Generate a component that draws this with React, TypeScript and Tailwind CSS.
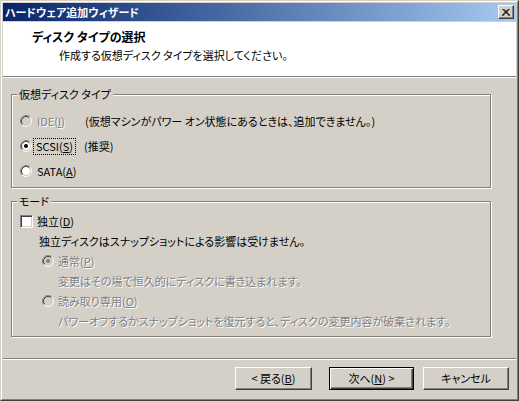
import type { ReactNode } from "react";

const disabledText = "text-[#808080] [text-shadow:1px_1px_0_#fff]";

const Radio = ({ checked, disabled }: { checked?: boolean; disabled?: boolean }) => (
  <svg width="12" height="12" viewBox="0 0 12 12" className="shrink-0">
    <circle cx="6" cy="6" r="4" fill={disabled ? "#d4d0c8" : "#fff"} />
    <path d="M2.11 9.89 A5.5 5.5 0 0 1 9.89 2.11" stroke="#808080" fill="none" />
    <path d="M9.89 2.11 A5.5 5.5 0 0 1 2.11 9.89" stroke="#fff" fill="none" />
    <path d="M2.82 9.18 A4.5 4.5 0 0 1 9.18 2.82" stroke="#404040" fill="none" />
    <path d="M9.18 2.82 A4.5 4.5 0 0 1 2.82 9.18" stroke="#d4d0c8" fill="none" />
    {checked && <circle cx="6" cy="6" r="2" fill={disabled ? "#808080" : "#000"} />}
  </svg>
);

const GroupBox = ({ label, className, children }: { label: string; className: string; children: ReactNode }) => (
  <div
    className={`relative ml-[8px] w-[480px] border border-[#808080] shadow-[inset_1px_1px_0_#fff,1px_1px_0_#fff] ${className}`}
  >
    <span className="absolute -top-[8px] left-[5px] bg-[#d4d0c8] px-[2px] leading-[14px]">{label}</span>
    {children}
  </div>
);

const Button = ({ children, width, isDefault }: { children: ReactNode; width: string; isDefault?: boolean }) => (
  <button
    className={`h-[23px] ${width} bg-[#d4d0c8] leading-none ${
      isDefault
        ? "border border-black shadow-[inset_1px_1px_0_#fff,inset_-1px_-1px_0_#404040,inset_-2px_-2px_0_#808080]"
        : "border border-t-white border-l-white border-r-[#404040] border-b-[#404040] shadow-[inset_-1px_-1px_0_#808080]"
    }`}
  >
    {children}
  </button>
);

export default function App() {
  return (
    <div className="w-[519px] h-[401px] bg-[#d4d0c8] text-[11px] text-black font-['Noto_Sans_CJK_JP',sans-serif] [font-feature-settings:'palt'] flex border border-t-[#d4d0c8] border-l-[#d4d0c8] border-r-[#404040] border-b-[#404040]">
      <div className="flex-1 flex flex-col p-px border border-t-white border-l-white border-r-[#808080] border-b-[#808080]">
        {/* title bar */}
        <div className="h-[18px] flex items-center justify-between bg-gradient-to-r from-[#0a246a] to-[#a6caf0] pl-[2px] pr-[2px]">
          <span className="text-white font-bold leading-none">ハードウェア追加ウィザード</span>
          <div className="w-[16px] h-[14px] flex items-center justify-center bg-[#d4d0c8] border border-t-white border-l-white border-r-[#404040] border-b-[#404040] shadow-[inset_-1px_-1px_0_#808080]">
            <svg width="8" height="7" viewBox="0 0 8 7">
              <path d="M0.5 0 L7.5 7 M1.5 0 L8.5 7 M7.5 0 L0.5 7 M6.5 0 L-0.5 7" stroke="#000" strokeWidth="1" />
            </svg>
          </div>
        </div>

        {/* header */}
        <div className="mt-px h-[55px] bg-white flex flex-col border-b border-[#808080]">
          <div className="pl-[29px] pt-[7px] text-[12px] font-bold leading-[15px]">ディスク タイプの選択</div>
          <div className="pl-[56px] pt-[4px] leading-[14px]">作成する仮想ディスク タイプを選択してください。</div>
        </div>
        <div className="h-px bg-white" />

        {/* virtual disk type */}
        <GroupBox label="仮想ディスク タイプ" className="mt-[16px] h-[94px] pt-[14px] pl-[8px] flex flex-col gap-px">
          <div className="h-6 flex items-center">
            <Radio disabled />
            <span className={`ml-[5px] ${disabledText}`}>
              IDE(<u>I</u>)
            </span>
            <span className="ml-[20px]">(仮想マシンがパワー オン状態にあるときは、追加できません。)</span>
          </div>
          <div className="h-6 flex items-center">
            <Radio checked />
            <span className="ml-[2px] px-[2px] leading-[15px] outline-1 outline-dotted outline-black">
              SCSI(<u>S</u>)
            </span>
            <span className="ml-[9px]">(推奨)</span>
          </div>
          <div className="h-6 flex items-center">
            <Radio />
            <span className="ml-[5px]">
              SATA(<u>A</u>)
            </span>
          </div>
        </GroupBox>

        {/* mode */}
        <GroupBox label="モード" className="mt-[13px] h-[136px] pt-[9px] pl-[8px] flex flex-col">
          <div className="h-5 flex items-center">
            <div className="size-[13px] bg-white border border-t-[#808080] border-l-[#808080] border-b-white border-r-white shadow-[inset_1px_1px_0_#404040,inset_-1px_-1px_0_#d4d0c8]" />
            <span className="ml-[4px]">
              独立(<u>D</u>)
            </span>
          </div>
          <div className="h-5 flex items-center pl-[19px]">独立ディスクはスナップショットによる影響は受けません。</div>
          <div className="h-5 flex items-center pl-[22px]">
            <Radio checked disabled />
            <span className={`ml-[4px] ${disabledText}`}>
              通常(<u>P</u>)
            </span>
          </div>
          <div className={`h-5 flex items-center pl-[38px] ${disabledText}`}>
            変更はその場で恒久的にディスクに書き込まれます。
          </div>
          <div className="h-5 flex items-center pl-[22px]">
            <Radio disabled />
            <span className={`ml-[4px] ${disabledText}`}>
              読み取り専用(<u>O</u>)
            </span>
          </div>
          <div className={`h-5 flex items-center pl-[38px] ${disabledText}`}>
            パワーオフするかスナップショットを復元すると、ディスクの変更内容が破棄されます。
          </div>
        </GroupBox>

        {/* footer */}
        <div className="mt-auto">
          <div className="h-px bg-[#808080]" />
          <div className="h-px bg-white" />
          <div className="mt-[7px] mb-[8px] flex justify-end pr-[7px]">
            <Button width="w-[77px]">
              &lt; 戻る(<u>B</u>)
            </Button>
            <div className="w-[17px]" />
            <Button width="w-[85px]" isDefault>
              次へ(<u>N</u>) &gt;
            </Button>
            <div className="w-[9px]" />
            <Button width="w-[86px]">キャンセル</Button>
          </div>
        </div>
      </div>
    </div>
  );
}
